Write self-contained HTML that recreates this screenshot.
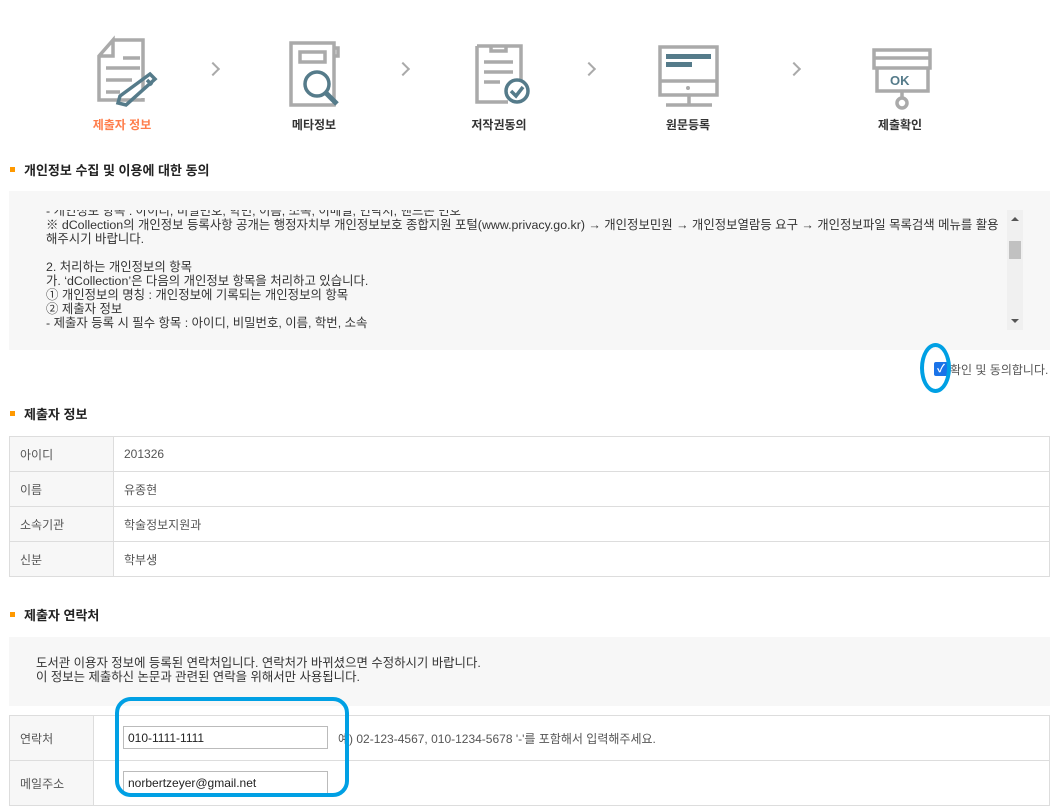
<!DOCTYPE html>
<html><head><meta charset="utf-8"><style>
*{margin:0;padding:0;box-sizing:border-box}
body{width:1053px;height:800px;overflow:hidden;background:#fff;font-family:"Liberation Sans","Noto Sans CJK KR",sans-serif;color:#555;position:relative;font-size:12px}
.abs{position:absolute}
.lbl{position:absolute;top:116px;font-size:12px;color:#333;width:120px;text-align:center;font-weight:bold}
.arr{position:absolute;top:64px;width:10px;height:10px;border-right:2.5px solid #aaa;border-top:2.5px solid #aaa;transform:rotate(45deg)}
.h{position:absolute;left:24px;font-size:13px;font-weight:bold;color:#222}
.sq{position:absolute;left:10px;width:5px;height:5px;background:#f90}
.box{position:absolute;left:9px;right:3px;background:#f7f7f7}
.txt{position:absolute;left:46px;font-size:12.4px;line-height:14px;color:#333;white-space:pre}
table{position:absolute;left:9px;width:1041px;border-collapse:collapse}
td{border:1px solid #ddd;font-size:12px;color:#555;padding-left:10px}
td.l{background:#f7f7f7}
input{position:absolute;height:23px;width:205px;border:1px solid #bbb;font-family:"Liberation Sans",sans-serif;font-size:12px;padding-left:4px;color:#222;background:#fff}
</style></head><body>
<svg class="abs" style="left:0;top:0" width="1053" height="112">
<g fill="none" stroke="#aaa" stroke-width="3.5">
<path d="M113 40H143V90M143 98V100H99V56L113 40V56H99"/>
<path d="M123 58H140M106 68H140M106 80H132M106 92H120"/>
<path d="M291 43H334V105H291Z M334 48H338V56H334"/>
<path d="M300 52H325V62H300Z"/>
<path d="M477 46H521V80M508 102H477V46M491 46V51H506V46"/>
<path d="M484 62H513M484 72H513M484 82H500"/>
<path d="M660 47H717V95H660Z M660 81H717 M689 95V105 M666 105H712"/>
<path d="M874 50H930V58H874Z M874 58H930V68H874Z M877 68H928V91H877Z M902 91V98"/>
<circle cx="902" cy="103" r="5"/>
</g>
<g fill="none" stroke="#557b8a" stroke-width="3.5">
<path d="M150 74L155 79L126 105L118 103L120 96Z M147 80L152 85"/>
<circle cx="317" cy="84" r="12"/><path d="M326 93L337 104" stroke-width="5"/>
<circle cx="517" cy="91" r="11" fill="#fff"/><path d="M511 91L516 96L523 87"/>
</g>
<rect x="666" y="54" width="45" height="5" fill="#557b8a"/><rect x="666" y="62" width="26" height="5" fill="#557b8a"/>
<circle cx="688" cy="88" r="2" fill="#aaa"/>
<text x="890" y="85" font-family="Liberation Sans" font-weight="bold" font-size="13" fill="#557b8a">OK</text>
</svg>
<div class="lbl" style="left:62px;color:#ff7d4b">제출자 정보</div>
<div class="lbl" style="left:254px">메타정보</div>
<div class="lbl" style="left:439px">저작권동의</div>
<div class="lbl" style="left:628px">원문등록</div>
<div class="lbl" style="left:840px">제출확인</div>
<div class="arr" style="left:208px"></div><div class="arr" style="left:398px"></div><div class="arr" style="left:584px"></div><div class="arr" style="left:789px"></div>

<div class="sq" style="top:167px"></div><div class="h" style="top:160px">개인정보 수집 및 이용에 대한 동의</div>
<div class="box" style="top:191px;height:159px"></div>
<div class="abs" style="left:40px;top:210px;width:968px;height:120px;overflow:hidden">
<div class="txt" style="left:6px;top:-6px">- 개인정보 항목 : 아이디, 비밀번호, 학번, 이름, 소속, 이메일, 연락처, 핸드폰 번호
※ dCollection의 개인정보 등록사항 공개는 행정자치부 개인정보보호 종합지원 포털(www.privacy.go.kr) → 개인정보민원 → 개인정보열람등 요구 → 개인정보파일 목록검색 메뉴를 활용
해주시기 바랍니다.

2. 처리하는 개인정보의 항목
가. ‘dCollection’은 다음의 개인정보 항목을 처리하고 있습니다.
① 개인정보의 명칭 : 개인정보에 기록되는 개인정보의 항목
② 제출자 정보
- 제출자 등록 시 필수 항목 : 아이디, 비밀번호, 이름, 학번, 소속</div></div>
<div class="abs" style="left:1007px;top:210px;width:16px;height:120px;background:#f0f0f0"></div>
<div class="abs" style="left:1009px;top:241px;width:12px;height:18px;background:#c1c1c1"></div>
<div class="abs" style="left:1011px;top:217px;border:4px solid transparent;border-bottom:4px solid #555;border-top:0"></div>
<div class="abs" style="left:1011px;top:319px;border:4px solid transparent;border-top:4px solid #555;border-bottom:0"></div>

<div class="abs" style="left:934px;top:362px;width:14px;height:14px;background:#1a73e8;border-radius:2px;color:#fff;font-size:11px;line-height:14px;text-align:center;font-weight:bold">✓</div>
<div class="abs" style="left:950px;top:361px;font-size:12px;color:#555">확인 및 동의합니다.</div>
<div class="abs" style="left:920px;top:343px;width:31px;height:50px;border:4px solid #00a0e4;border-radius:50%"></div>

<div class="sq" style="top:411px"></div><div class="h" style="top:404px">제출자 정보</div>
<table style="top:436px">
<tr style="height:35px"><td class="l" style="width:104px">아이디</td><td>201326</td></tr>
<tr style="height:35px"><td class="l">이름</td><td>유종현</td></tr>
<tr style="height:35px"><td class="l">소속기관</td><td>학술정보지원과</td></tr>
<tr style="height:35px"><td class="l">신분</td><td>학부생</td></tr>
</table>

<div class="sq" style="top:612px"></div><div class="h" style="top:605px">제출자 연락처</div>
<div class="box" style="top:637px;height:69px"></div>
<div class="txt" style="left:36px;top:656px">도서관 이용자 정보에 등록된 연락처입니다. 연락처가 바뀌셨으면 수정하시기 바랍니다.
이 정보는 제출하신 논문과 관련된 연락을 위해서만 사용됩니다.</div>
<table style="top:715px">
<tr style="height:45px"><td class="l" style="width:84px">연락처</td><td style="padding-left:244px">예) 02-123-4567, 010-1234-5678 '-'를 포함해서 입력해주세요.</td></tr>
<tr style="height:45px"><td class="l">메일주소</td><td></td></tr>
</table>
<input style="left:123px;top:726px" value="010-1111-1111">
<input style="left:123px;top:771px" value="norbertzeyer@gmail.net">
<div class="abs" style="left:115px;top:697px;width:234px;height:100px;border:4px solid #00a0e4;border-radius:16px"></div>
</body></html>
